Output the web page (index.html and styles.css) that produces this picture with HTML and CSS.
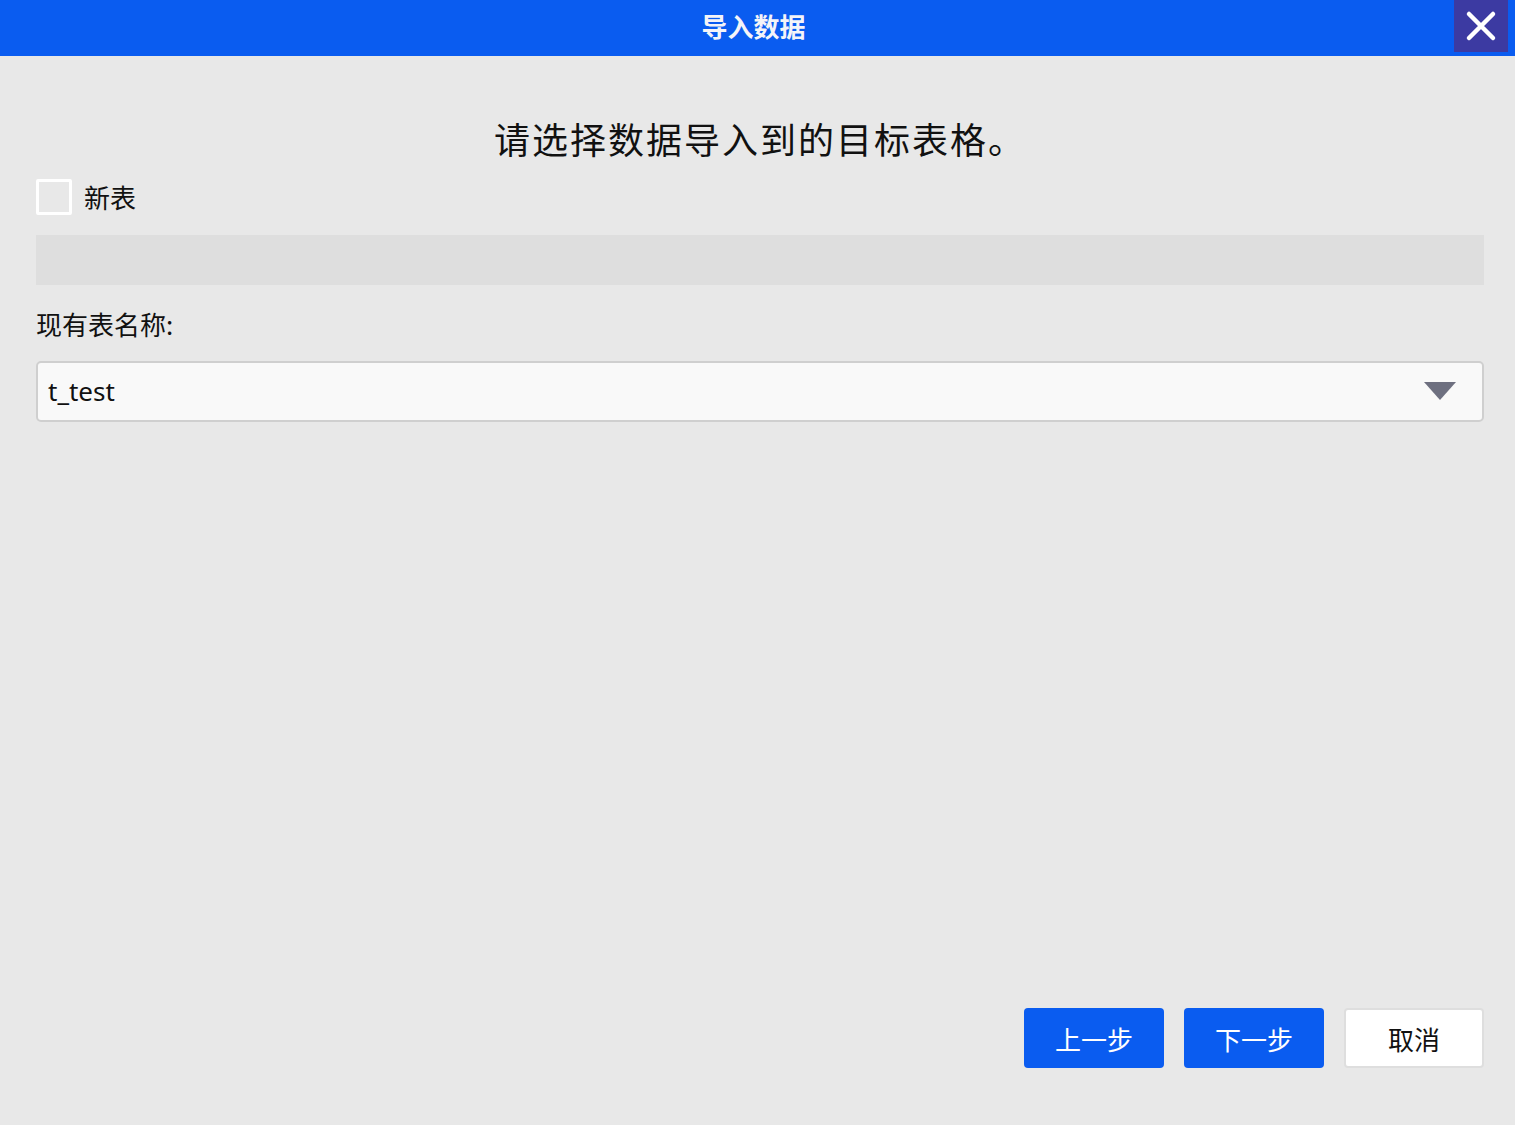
FILE: index.html
```html
<!DOCTYPE html>
<html lang="zh-CN">
<head>
    <meta charset="UTF-8">
    <link rel="stylesheet" href="styles.css">
    <title>导入数据</title>
</head>
<body>
  <div class="dialog">
    <div class="title-bar">
      <span class="title">导入数据</span>
      <div class="close-btn">
        <svg width="32" height="32" viewBox="0 0 32 32">
          <path d="M4 4 L28 28 M28 4 L4 28" stroke="#fff" stroke-width="4.5" stroke-linecap="round"/>
        </svg>
      </div>
    </div>

    <div class="content">
      <h1 class="prompt">请选择数据导入到的目标表格。</h1>

      <label class="check-row">
        <span class="checkbox"></span>
        <span class="check-label">新表</span>
      </label>

      <div class="new-table-input"></div>

      <div class="field-label">现有表名称:</div>

      <div class="select-box">
        <span class="select-value">t_test</span>
        <span class="select-arrow"></span>
      </div>

      <div class="footer">
        <button class="btn btn-primary">上一步</button>
        <button class="btn btn-primary">下一步</button>
        <button class="btn btn-default">取消</button>
      </div>
    </div>
  </div>
</body>
</html>
```

FILE: styles.css
```css
body {
    margin: 0;
    padding: 0;
    background-color: #e8e8e8;
    font-family: "Noto Sans CJK SC", "Noto Sans", sans-serif;
    color: #111;
}

.dialog {
    display: flex;
    flex-direction: column;
    min-height: 100vh;
}

/* title bar */
.title-bar {
    position: relative;
    height: 56px;
    background-color: #0a5cf0;
    display: flex;
    justify-content: center;
    align-items: center;
}

.title {
    color: #f4f4f8;
    font-size: 26px;
    font-weight: bold;
    margin-top: -6px;
    margin-right: 8px;
}

.close-btn {
    position: absolute;
    top: 0;
    right: 7px;
    width: 54px;
    height: 52px;
    background-color: #3c3aa2;
    display: flex;
    justify-content: center;
    align-items: center;
}

/* body */
.content {
    flex: 1;
    display: flex;
    flex-direction: column;
    padding: 0 31px 57px 36px;
}

.prompt {
    margin: 56px 0 0 0;
    text-align: center;
    font-size: 36px;
    font-weight: normal;
    letter-spacing: 2px;
    line-height: 52px;
    color: #111;
}

.check-row {
    display: flex;
    align-items: center;
    margin-top: 15px;
    height: 36px;
}

.checkbox {
    width: 30px;
    height: 30px;
    border: 3px solid #fff;
    border-radius: 2px;
    background-color: #e8e8e8;
}

.check-label {
    margin-left: 12px;
    font-size: 26px;
    line-height: 36px;
}

.new-table-input {
    margin-top: 20px;
    height: 50px;
    background-color: #dedede;
}

.field-label {
    margin-top: 21px;
    font-size: 26px;
    line-height: 36px;
}

.select-box {
    margin-top: 19px;
    height: 57px;
    border: 2px solid #cfcfcf;
    border-radius: 5px;
    background-color: #f9f9f9;
    display: flex;
    align-items: center;
    justify-content: space-between;
    padding: 0 26px 0 10px;
}

.select-value {
    font-size: 26px;
    font-family: "Noto Sans", "Noto Sans CJK SC", sans-serif;
    margin-top: -2px;
}

.select-arrow {
    width: 0;
    height: 0;
    border-left: 16px solid transparent;
    border-right: 16px solid transparent;
    border-top: 18px solid #6e7080;
    margin-top: -2px;
}

.footer {
    margin-top: auto;
    display: flex;
    justify-content: flex-end;
    gap: 20px;
}

.btn {
    width: 140px;
    height: 60px;
    border-radius: 4px;
    font-family: "Noto Sans CJK SC", sans-serif;
    font-size: 26px;
    cursor: pointer;
}

.btn-primary {
    background-color: #0a5cf0;
    color: #fff;
    border: none;
}

.btn-default {
    background-color: #fff;
    color: #111;
    border: 2px solid #dedede;
}
```
